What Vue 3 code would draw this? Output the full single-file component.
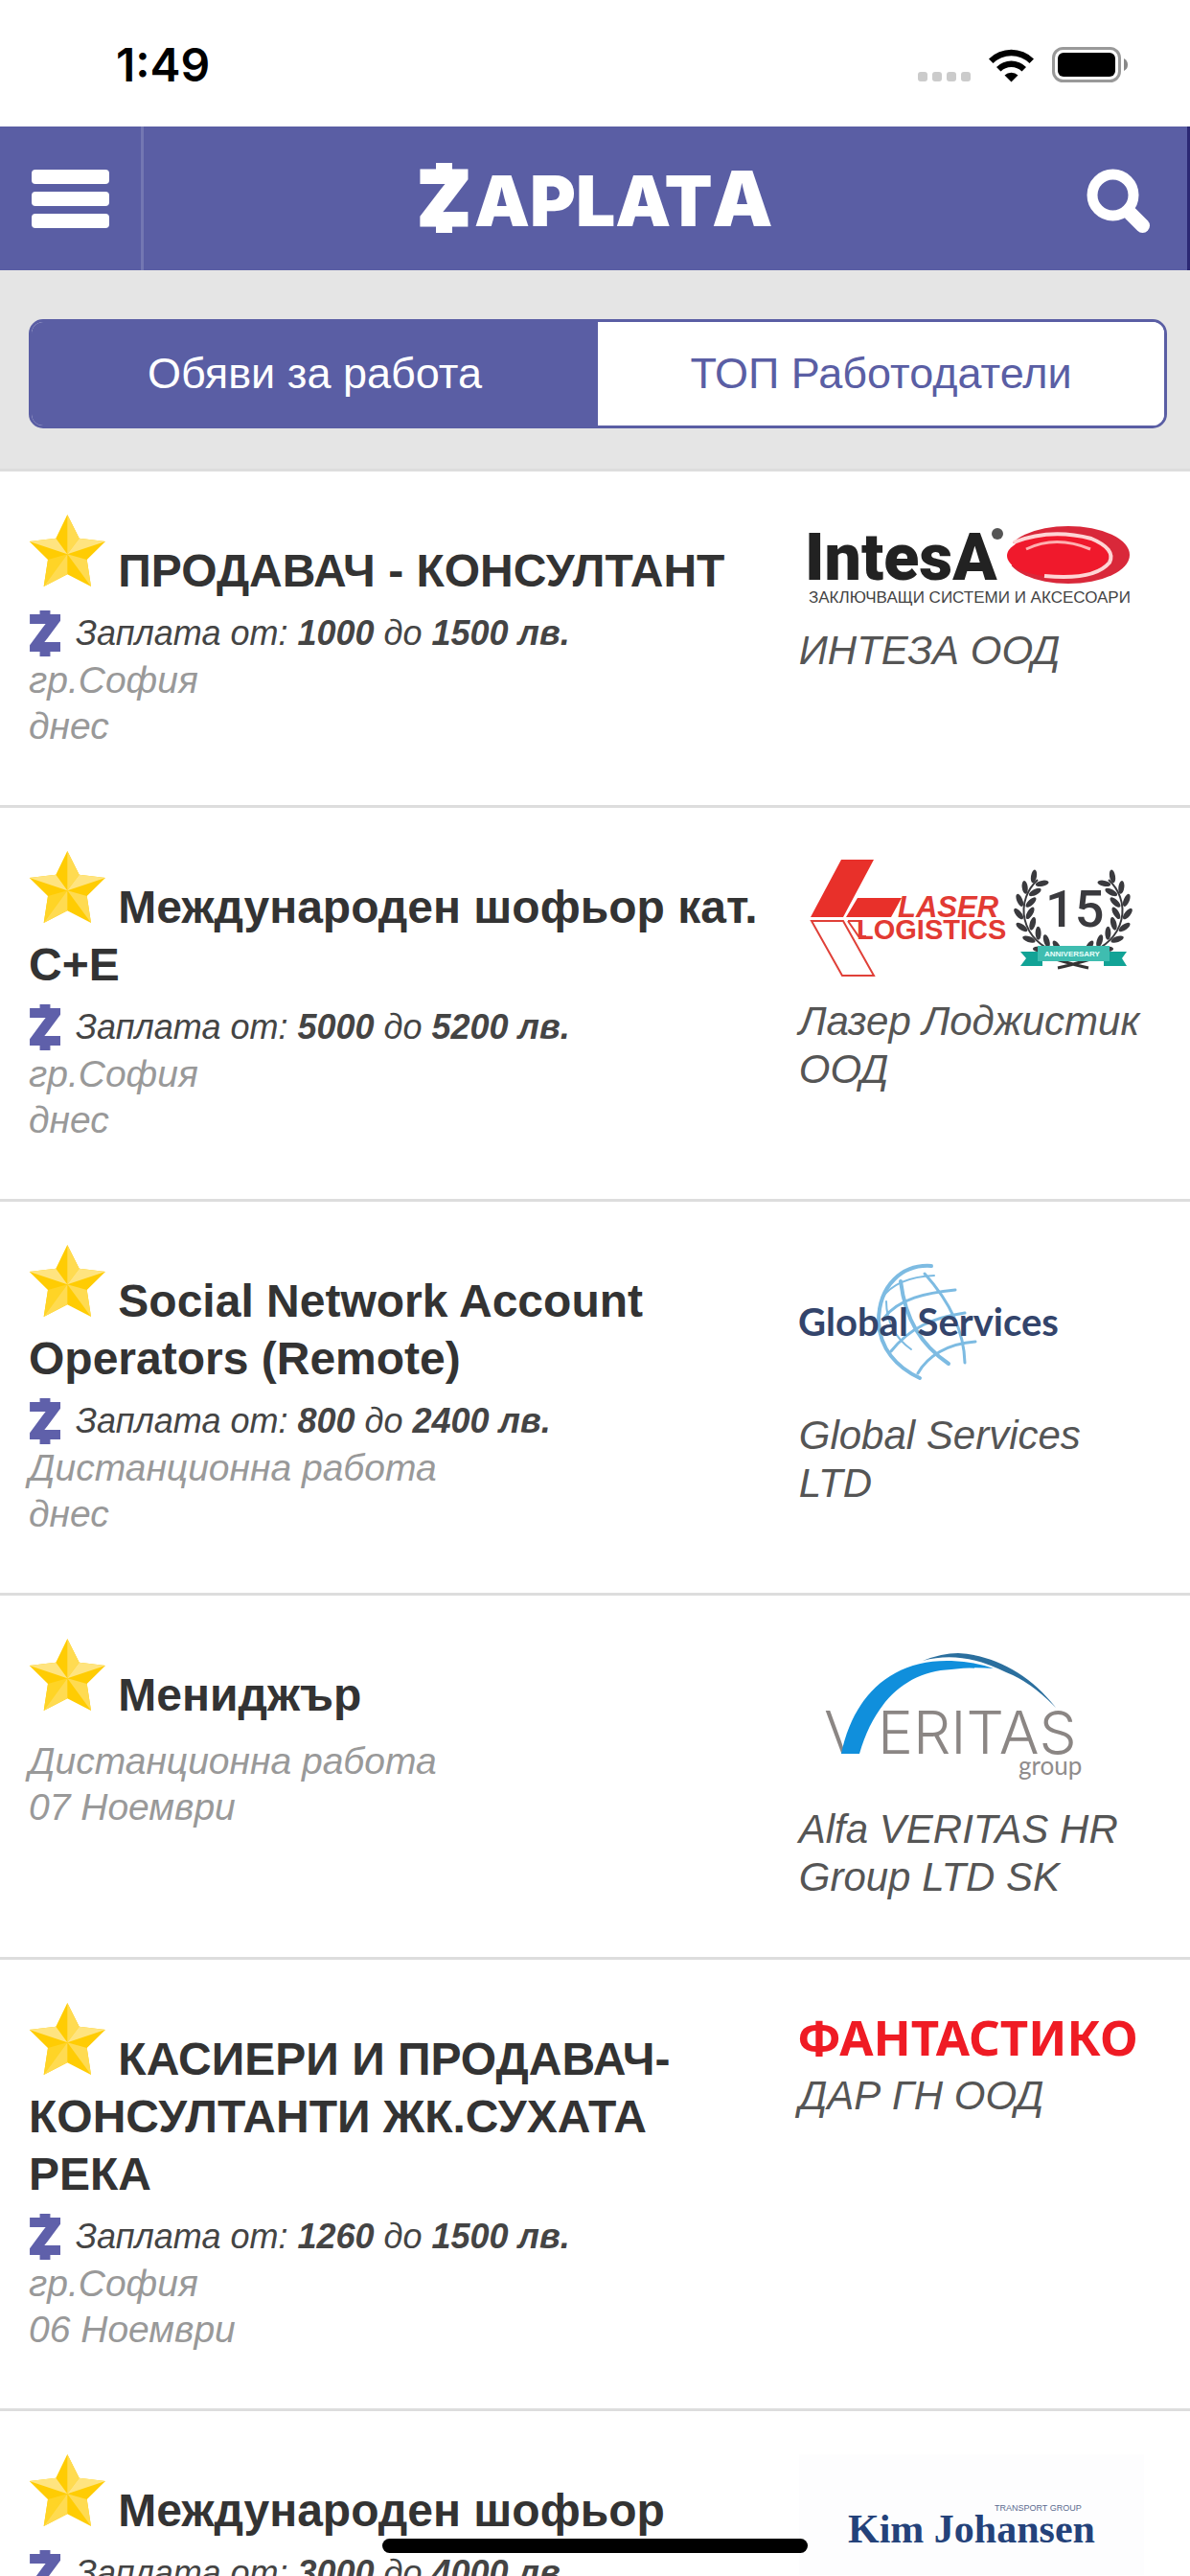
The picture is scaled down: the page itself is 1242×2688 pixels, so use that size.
<script setup>
import { ref } from "vue";

// активен таб
const activeTab = ref("jobs");
const tabs = [
  { id: "jobs", label: "Обяви за работа" },
  { id: "top", label: "ТОП Работодатели" },
];

// списък с обяви
const jobs = [
  { id: 1, title: "ПРОДАВАЧ - КОНСУЛТАНТ", from: 1000, to: 1500, place: "гр.София", date: "днес", logo: "intesa", company: "ИНТЕЗА ООД" },
  { id: 2, title: "Международен шофьор кат. C+E", from: 5000, to: 5200, place: "гр.София", date: "днес", logo: "laser", company: "Лазер Лоджистик ООД" },
  { id: 3, title: "Social Network Account Operators (Remote)", from: 800, to: 2400, place: "Дистанционна работа", date: "днес", logo: "global", company: "Global Services LTD" },
  { id: 4, title: "Мениджър", place: "Дистанционна работа", date: "07 Ноември", logo: "veritas", company: "Alfa VERITAS HR Group LTD SK" },
  { id: 5, title: "КАСИЕРИ И ПРОДАВАЧ-КОНСУЛТАНТИ ЖК.СУХАТА РЕКА", from: 1260, to: 1500, place: "гр.София", date: "06 Ноември", logo: "fantastiko", company: "ДАР ГН ООД" },
  { id: 6, title: "Международен шофьор", from: 3000, to: 4000, place: "гр.София", date: "06 Ноември", logo: "kim", company: "Kim Johansen" },
];

// листата на лавровия венец, по две на всяка стъпка
const leaves = [];
for (let i = 0; i < 8; i++) {
  const degrees = 112 + i * 16;
  const angle = (degrees * Math.PI) / 180;
  for (const r of [45, 57]) {
    const dx = r * Math.cos(angle);
    const y = 62 + r * Math.sin(angle) * 0.9;
    const turn = degrees - 180 + (r === 45 ? 35 : -35);
    leaves.push({ x: 286 + dx, y, turn });
    leaves.push({ x: 286 - dx, y, turn: -turn });
  }
}
</script>

<template>
  <div class="page">
    <div class="status">
      <span class="time">1:49</span>
      <svg class="status-icons" width="220" height="40" viewBox="0 0 220 40" aria-hidden="true">
        <rect v-for="n in 4" :key="n" :x="n * 15 - 15" y="27" width="10" height="10" rx="3" fill="#cbcbcb" />
        <path d="M74 13.500A33.500 33.500 0 0 1 121 13.500L116.500 18A27 27 0 0 0 78.500 18Z" />
        <path d="M82 22A22 22 0 0 1 113 22L108.500 26.500A15.500 15.500 0 0 0 86.500 26.500Z" />
        <path d="M90.500 30.500A10 10 0 0 1 104.500 30.500L97.500 37.500Z" />
        <rect x="141.500" y="2.500" width="69" height="34" rx="10" fill="none" stroke="#999" stroke-width="3" />
        <rect x="146" y="7" width="60" height="25" rx="6" />
        <path d="M215 13Q219 15 219 19.500T215 26Z" fill="#888" />
      </svg>
    </div>

    <header class="header">
      <button class="menu-btn" type="button" aria-label="Меню">
        <span></span>
        <span></span>
        <span></span>
      </button>
      <svg class="brand" width="368" height="76" viewBox="0 0 368 76" role="img" aria-label="Zaplata">
        <rect x="18" y="1" width="17" height="12" />
        <rect x="18" y="62" width="17" height="12" />
        <text x="-1" y="66" font-size="79" stroke="#fff" stroke-width="3">Z</text>
        <text x="58" y="67" font-size="73">APLAT</text>
        <text x="306" y="67" font-size="80">A</text>
      </svg>
      <button class="search-btn" type="button" aria-label="Търсене">
        <svg width="68" height="68" viewBox="0 0 68 68" fill="none" stroke="#fff">
          <circle cx="27.500" cy="27.500" r="21.500" stroke-width="11" />
          <path d="M46 47L58.500 59.500" stroke-width="15" stroke-linecap="round" />
        </svg>
      </button>
    </header>

    <nav class="tabs-wrap">
      <div class="tabs">
        <button
          v-for="tab in tabs"
          :key="tab.id"
          type="button"
          class="tab"
          :class="{ active: activeTab === tab.id }"
          @click="activeTab = tab.id"
        >
          {{ tab.label }}
        </button>
      </div>
    </nav>

    <main class="list">
      <article v-for="job in jobs" :key="job.id" class="job">
        <div class="info">
          <h2 class="title">
            <svg class="star" width="80" height="75" viewBox="0 0 80 75" aria-hidden="true">
              <path d="M40.300 0L52.700 24.700L80 28L60.700 47L65 75L40.300 62.300L15.700 75L20 47L.700 28L28.300 24.700Z" fill="#ffcc03" />
              <path d="M40.300 0L52.700 24.700L40.300 41.300ZM65 75L60.700 47L40.300 41.300Z" fill="#ffdb51" />
              <path d="M80 28L52.700 24.700L40.300 41.300ZM.700 28L28.300 24.700L40.300 41.300Z" fill="#ffe480" />
              <path d="M15.700 75L20 47L40.300 41.300Z" fill="#ffd426" />
              <path d="M15.700 75L40.300 62.300V41.300Z" fill="#ffdb51" />
            </svg>
            {{ job.title }}
          </h2>
          <p v-if="job.from" class="salary">
            <svg class="z-icon" width="34" height="48" viewBox="0 0 53 75" aria-hidden="true">
              <rect x="18" y="0" width="17" height="12" />
              <rect x="18" y="63" width="17" height="12" />
              <text x="-1" y="66" font-size="79" stroke="#5f60aa" stroke-width="3">Z</text>
            </svg>
            <span>Заплата от: <b>{{ job.from }}</b> до <b>{{ job.to }} лв.</b></span>
          </p>
          <p class="meta">{{ job.place }}</p>
          <p class="meta">{{ job.date }}</p>
        </div>

        <div class="company">
          <svg v-if="job.logo === 'intesa'" class="logo" width="360" height="105" viewBox="0 0 360 105">
            <text x="6" y="68" class="roboto-black" font-size="68" fill="#222">IntesA</text>
            <circle cx="207" cy="20" r="6" fill="#555" />
            <ellipse cx="281" cy="42" rx="64" ry="30" fill="#d9283a" />
            <path d="M216 26L234 34L226 48L216 60Z" fill="#fff" />
            <ellipse cx="270" cy="43" rx="53" ry="22" fill="#f0192c" />
            <path d="M224 29Q262 14 305 25Q331 36 324 50Q308 69 256 64" fill="none" stroke="#ffd5d5" stroke-width="4" />
            <path d="M237 36Q268 21 304 36" fill="none" stroke="#ffb0b0" stroke-width="3" />
            <text x="10" y="92" class="arial-regular" font-size="17" fill="#444">ЗАКЛЮЧВАЩИ СИСТЕМИ И АКСЕСОАРИ</text>
          </svg>

          <svg v-else-if="job.logo === 'laser'" class="logo" width="360" height="141" viewBox="0 0 360 141">
            <path d="M44 9H78L46 69H12ZM61 49H107L96 69H49Z" fill="#e8302a" />
            <path d="M13 73H46L78 130H45ZM51 73H64M51 73L62 89H70" fill="none" stroke="#e04038" stroke-width="2" />
            <text x="103" y="69" class="arial" font-size="31" font-style="italic" fill="#e23a33">LASER</text>
            <text x="60" y="92" class="arial" font-size="29" fill="#e23a33">LOGISTICS</text>
            <path d="M267 105A51 46 0 0 1 249 30M305 105A51 46 0 0 0 323 30" fill="none" stroke="#3a3a3e" stroke-width="2" />
            <ellipse
              v-for="(leaf, i) in leaves"
              :key="i"
              :cx="leaf.x"
              :cy="leaf.y"
              rx="3"
              ry="7"
              :transform="`rotate(${leaf.turn} ${leaf.x} ${leaf.y})`"
              fill="#3a3a3e"
            />
            <text x="257" y="79" class="roboto" font-size="54" fill="#3a3a3e">15</text>
            <path d="M270 122Q284 119 304 113M302 122Q288 119 268 113" fill="none" stroke="#333" stroke-width="3" />
            <path d="M231 105H342L337 112L342 120H318V114H254V120H231L237 112Z" fill="#12a396" />
            <rect x="249" y="99" width="75" height="16" fill="#3fbdb0" />
            <text x="256" y="110" class="arial" font-size="8" fill="#e8fffb">ANNIVERSARY</text>
          </svg>

          <svg v-else-if="job.logo === 'global'" class="logo" width="360" height="162" viewBox="0 0 360 162">
            <g fill="none" stroke="#7dbbe2" stroke-linecap="round" transform="translate(0 -6)">
              <path d="M138 28C108 26 83 48 83 86C84 114 102 134 126 145" stroke-width="4" />
              <path d="M141 38C118 39 97 46 86 62" stroke-width="2" />
              <path d="M163 53C133 56 104 62 89 82M173 77C140 82 116 92 96 117M184 107C155 109 134 122 124 140" stroke-width="3" />
              <path d="M131 36C149 56 172 88 173 129" stroke-width="3" />
              <path d="M106 44C111 84 127 110 156 130" stroke-width="4" />
              <path d="M91 65C91 86 101 104 117 115" stroke-width="2" />
            </g>
            <text x="-1" y="95" class="lato-bold" font-size="40" fill="#33446b">Global Services</text>
          </svg>

          <svg v-else-if="job.logo === 'veritas'" class="logo" width="360" height="162" viewBox="0 0 360 162">
            <text x="26" y="120" class="inter-light" font-size="62" fill="#8b8684">V</text>
            <path d="M44 120C56 62 94 21 159 23Q184 24 203 31Q180 29 159 32C110 34 78 68 63 120Z" fill="#108fdc" />
            <path d="M129 23Q149 15 166 15C205 17 243 39 268 72Q242 45 216 35C186 20 158 15 129 23Z" fill="#2b6f9e" />
            <text x="82" y="120" class="inter-light" font-size="62" fill="#8b8684">ERITAS</text>
            <text x="229" y="142" class="lato" font-size="26" fill="#908c8c">group</text>
          </svg>

          <svg v-else-if="job.logo === 'fantastiko'" class="logo" width="360" height="60" viewBox="0 0 360 60">
            <text x="-2" y="55" class="noto" font-size="51" fill="#ef1b24">ФАНТАСТИКО</text>
          </svg>

          <svg v-else class="logo" width="360" height="126" viewBox="0 0 360 126">
            <rect width="360" height="126" fill="#fdfdfe" />
            <text x="51" y="92" class="serif" font-size="42" fill="#24427a">Kim Johansen</text>
            <text x="204" y="59" class="arial-regular" font-size="9" fill="#5a6b90">TRANSPORT GROUP</text>
          </svg>
          <a href="#" class="company-name">{{ job.company }}</a>
        </div>
      </article>
    </main>

    <div class="home-bar"></div>
  </div>
</template>

<style>
body {
  margin: 0;
  background: #fff;
}
</style>

<style scoped>
.page {
  height: 100vh;
  overflow: hidden;
  font-family: "Liberation Sans", Arial, sans-serif;
  color: #333;
}
button {
  font-family: inherit;
  border: none;
  padding: 0;
  cursor: pointer;
}
.status {
  display: flex;
  align-items: center;
  justify-content: space-between;
  box-sizing: border-box;
  height: 132px;
  padding: 4px 64px 0 121px;
}
.time {
  font-family: Inter, sans-serif;
  font-size: 48px;
  font-weight: 600;
  line-height: 60px;
  color: #000;
}
/* горна лента */
.header {
  display: flex;
  justify-content: space-between;
  align-items: center;
  height: 150px;
  box-sizing: border-box;
  background: #5a5ea4;
  border-right: 3px solid #2b2873;
}
.menu-btn {
  display: flex;
  flex-direction: column;
  align-items: center;
  justify-content: center;
  gap: 8px;
  width: 150px;
  height: 150px;
  background: none;
  border-right: 3px solid #7377b2;
}
.menu-btn span {
  width: 81px;
  height: 15px;
  border-radius: 4px;
  background: #fff;
}
.brand {
  fill: #fff;
  font-family: Inter, sans-serif;
  font-weight: 900;
  overflow: visible;
}
.search-btn {
  display: flex;
  align-items: center;
  justify-content: flex-end;
  box-sizing: border-box;
  width: 147px;
  height: 150px;
  padding: 6px 37px 0 0;
  background: none;
}
/* табове */
.tabs-wrap {
  padding: 51px 24px 42px 30px;
  background: #e5e5e5;
  border-bottom: 3px solid #ddd;
}
.tabs {
  display: flex;
  height: 108px;
  border: 3px solid #5a5ea4;
  border-radius: 15px;
  overflow: hidden;
  background: #fff;
}
.tab {
  flex: 1;
  font-size: 45px;
  color: #5a5ea4;
  background: #fff;
}
.tab.active {
  color: #fff;
  background: #5a5ea4;
}
/* обяви */
.job {
  display: grid;
  grid-template-columns: 68% 32%;
  padding: 45px 30px 58px;
  border-bottom: 3px solid #ddd;
}
.info {
  padding-right: 30px;
}
.title {
  margin: 0 0 15px;
  font-size: 48px;
  line-height: 60px;
  font-weight: bold;
}
.star {
  vertical-align: baseline;
}
.salary {
  display: flex;
  align-items: center;
  gap: 15px;
  margin: -4px 0 1px;
  font-size: 36px;
  line-height: 48px;
  font-style: italic;
  color: #444;
}
.z-icon {
  fill: #5f60aa;
  font-family: Inter, sans-serif;
  font-style: normal;
  font-weight: 900;
  overflow: visible;
}
.meta {
  margin: 0;
  font-size: 39px;
  line-height: 48px;
  font-style: italic;
  color: #999;
}
.logo {
  display: block;
  margin-bottom: 12px;
}
.company-name {
  display: block;
  font-size: 42px;
  line-height: 50px;
  font-style: italic;
  color: #555;
  text-decoration: none;
}
/* шрифтове в логата */
.arial {
  font-weight: bold;
}
.arial-regular {
  font-weight: normal;
}
.roboto {
  font-family: Roboto, sans-serif;
  font-weight: 500;
}
.roboto-black {
  font-family: Roboto, sans-serif;
  font-weight: 900;
}
.inter-light {
  font-family: Inter, sans-serif;
  font-weight: 300;
}
.lato {
  font-family: Lato, sans-serif;
}
.lato-bold {
  font-family: Lato, sans-serif;
  font-weight: bold;
}
.noto {
  font-family: "Noto Sans", sans-serif;
  font-weight: bold;
}
.serif {
  font-family: "Liberation Serif", serif;
  font-weight: bold;
}
.home-bar {
  position: fixed;
  left: 50%;
  bottom: 24px;
  width: 444px;
  height: 15px;
  margin-left: -222px;
  border-radius: 8px;
  background: #000;
}
</style>
